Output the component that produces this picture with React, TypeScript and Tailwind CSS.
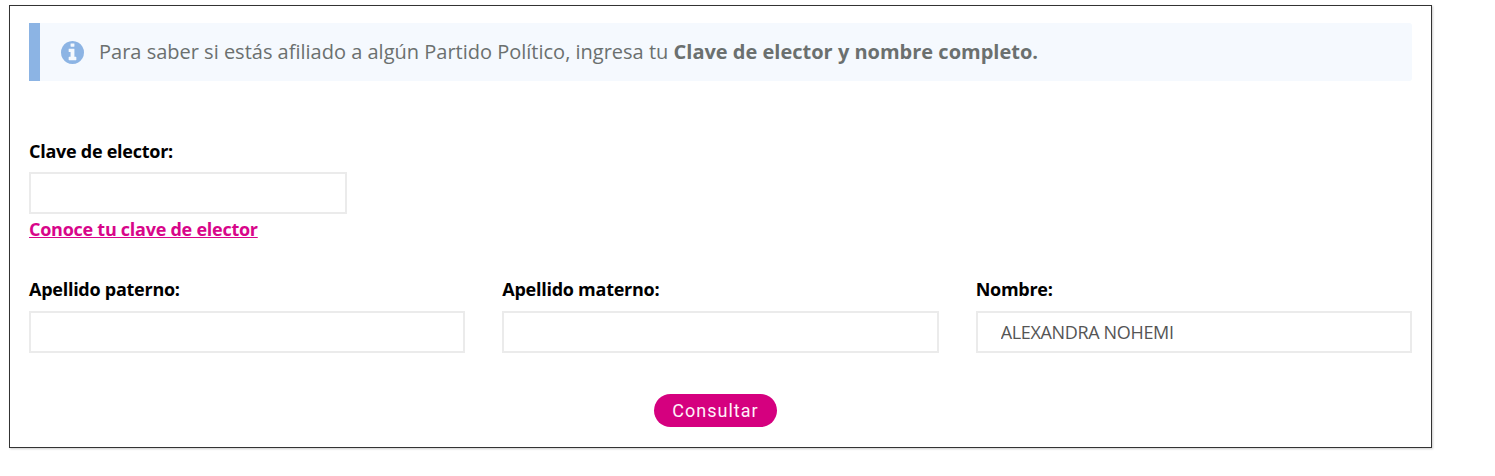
import { useState } from 'react'

interface FieldProps {
  id: string
  label: string
  value: string
  onChange: (value: string) => void
}

function InfoIcon() {
  return (
    <svg viewBox="0 0 1536 1536" fill="currentColor" aria-hidden="true" className="size-[23px] text-[#8cb4e4]">
      <path d="M1024 1248v-160q0-14-9-23t-23-9h-96v-512q0-14-9-23t-23-9h-320q-14 0-23 9t-9 23v160q0 14 9 23t23 9h96v320h-96q-14 0-23 9t-9 23v160q0 14 9 23t23 9h448q14 0 23-9t9-23zM896 352v-160q0-14-9-23t-23-9h-192q-14 0-23 9t-9 23v160q0 14 9 23t23 9h192q14 0 23-9t9-23zM1536 768q0 209-103 385.500t-279.500 279.500-385.500 103-385.500-103-279.500-279.500-103-385.500 103-385.500 279.500-279.500 385.500-103 385.500 103 279.500 279.500 103 385.500z" />
    </svg>
  )
}

function Field({ id, label, value, onChange }: FieldProps) {
  return (
    <div className="flex flex-col">
      <label htmlFor={id} className="h-6 text-[18px] leading-6 font-bold tracking-[-0.26px] text-black">
        {label}
      </label>
      <input
        id={id}
        value={value}
        onChange={e => onChange(e.target.value)}
        className="mt-[9px] h-[42px] w-full border-2 border-[#ebebeb] bg-white px-[23px] text-[18px] tracking-[-0.34px] text-[#555] outline-none"
      />
    </div>
  )
}

export default function App() {
  const [clave, setClave] = useState('')
  const [paterno, setPaterno] = useState('')
  const [materno, setMaterno] = useState('')
  const [nombre, setNombre] = useState('ALEXANDRA NOHEMI')

  return (
    <div className="min-h-[476px] bg-white pt-[5px] pl-[9px] font-['Open_Sans',sans-serif]">
      <main className="h-[443px] w-[1423px] border border-[#333] pt-[17px] pr-[19px] pl-[19px] shadow-[1px_1px_2px_rgba(0,0,0,0.2)]">
        <div className="flex h-[58px] items-center rounded-r-[3px] border-l-[11px] border-[#8cb4e4] bg-[#f5f9fe] pl-[21px]">
          <InfoIcon />
          <p className="ml-[15px] text-[20px] text-[#6b706f]">
            Para saber si estás afiliado a algún Partido Político, ingresa tu{' '}
            <strong>Clave de elector y nombre completo.</strong>
          </p>
        </div>

        <form onSubmit={e => e.preventDefault()}>
          <div className="mt-[58px] w-[318px]">
            <Field id="clave" label="Clave de elector:" value={clave} onChange={setClave} />
            <a href="#clave" className="mt-[3px] block h-6 text-[18px] leading-6 font-bold tracking-[-0.26px] text-[#d8058a] underline">
              Conoce tu clave de elector
            </a>
          </div>

          <div className="mt-9 grid grid-cols-3 gap-x-[37px] [&_input]:mt-[10px]">
            <Field id="paterno" label="Apellido paterno:" value={paterno} onChange={setPaterno} />
            <Field id="materno" label="Apellido materno:" value={materno} onChange={setMaterno} />
            <Field id="nombre" label="Nombre:" value={nombre} onChange={setNombre} />
          </div>

          <button type="submit" className="mt-[41px] ml-[625px] block h-[33px] w-[123px] rounded-full bg-[#d5007f] font-[Roboto,sans-serif] text-[18px] tracking-[1px] text-[#fff0fa]">
            Consultar
          </button>
        </form>
      </main>
    </div>
  )
}
